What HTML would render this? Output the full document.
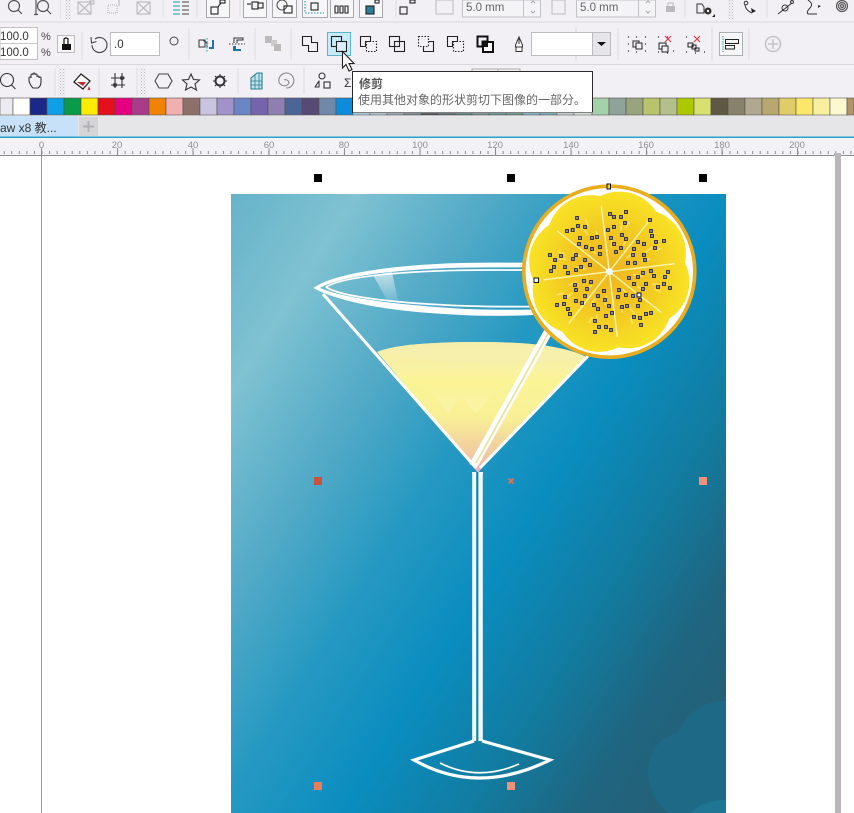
<!DOCTYPE html>
<html><head><meta charset="utf-8"><title>CorelDRAW</title>
<style>
html,body{margin:0;padding:0;background:#fff;width:854px;height:813px;overflow:hidden}
svg{display:block;font-family:"Liberation Sans","Noto Sans CJK SC",sans-serif}
</style></head><body>
<svg width="854" height="813" viewBox="0 0 854 813" xmlns="http://www.w3.org/2000/svg">
<defs>
<linearGradient id="bg" gradientUnits="userSpaceOnUse" x1="231" y1="194" x2="873" y2="599">
<stop offset="0" stop-color="#66b3c9"/><stop offset=".14" stop-color="#7fc2d2"/><stop offset=".3" stop-color="#4ea8c6"/><stop offset=".42" stop-color="#2699c2"/><stop offset=".56" stop-color="#0a8dbf"/><stop offset=".71" stop-color="#137a9e"/><stop offset=".82" stop-color="#1f6580"/><stop offset="1" stop-color="#2a5c70"/>
</linearGradient>
<linearGradient id="liq" x1="0" y1="0" x2="0" y2="1">
<stop offset="0" stop-color="#f6eda6"/><stop offset=".2" stop-color="#f8f2a4"/><stop offset=".3" stop-color="#fbf495"/><stop offset=".58" stop-color="#f9f096"/><stop offset=".82" stop-color="#f2d09e"/><stop offset="1" stop-color="#f4b9a8"/>
</linearGradient>
<linearGradient id="zig" x1="0" y1="0" x2="0" y2="1"><stop offset="0" stop-color="#fdf8c8" stop-opacity="0"/><stop offset="1" stop-color="#fdf8c8" stop-opacity=".4"/></linearGradient>
<linearGradient id="sheen" x1="0" y1="0" x2="0" y2="1"><stop offset="0" stop-color="#fff" stop-opacity=".6"/><stop offset="1" stop-color="#fff" stop-opacity=".1"/></linearGradient>
<radialGradient id="lem" gradientUnits="userSpaceOnUse" cx="0" cy="0" r="82"><stop offset="0" stop-color="#efb622"/><stop offset=".5" stop-color="#f2c722"/><stop offset=".8" stop-color="#f6d924"/><stop offset="1" stop-color="#f9e326"/></radialGradient>
<pattern id="tick" patternUnits="userSpaceOnUse" x="41.5" y="0" width="7.56" height="20"><rect x="0" y="15" width="1" height="3" fill="#8c8c90"/></pattern>
<pattern id="dots" patternUnits="userSpaceOnUse" width="3" height="3"><rect width="1" height="1" fill="#bcbcc0"/><rect x="1.500" y="1.500" width="1" height="1" fill="#d0d0d4"/></pattern>
</defs>

<!-- chrome -->
<rect width="854" height="155" fill="#f2f0f5"/>
<rect y="21.500" width="854" height="1" fill="#d9d9dd"/>
<rect y="64" width="854" height="1" fill="#d9d9dd"/>

<!-- row 1 -->
<g fill="none" stroke="#555" stroke-width="1.200">
<circle cx="14" cy="6" r="5.500"/><path d="M18 10l4 4"/>
<circle cx="43" cy="6" r="5.500"/><path d="M47 10l4 4M36 0v14M34 14.500h4"/>
</g>
<rect x="60" y="0" width="1" height="19" fill="#e2e2e6"/>
<rect x="65" y="0" width="6" height="20" fill="url(#dots)"/>
<g fill="none" stroke="#bdbdc2" stroke-width="1.200">
<rect x="78" y="2" width="13" height="12"/><path d="M78 2l13 12M78 14l13-12M90 1h4v3h-4z"/>
<rect x="108" y="5" width="9" height="8" stroke-dasharray="1 1"/><path d="M119 0v6"/>
<rect x="137" y="2" width="13" height="12"/><path d="M137 2l13 12M137 14l13-12"/>
</g>
<path d="M163 0v17" stroke="#e0e0e4"/>
<g stroke="#444" stroke-width="1"><path d="M182 2h7M182 6h7M182 10h7M182 14h7"/></g>
<g stroke="#17a39b" stroke-width="1"><path d="M173 2h7M173 6h7M173 10h7M173 14h7"/></g>
<path d="M197 0v17" stroke="#ddd"/>
<g fill="#f7f6f9" stroke="#a8a8ac">
<path d="M206.500 0v17.500h23V0M243.500 0v17.500h23V0M272.500 0v17.500h24V0M302.500 0v17.500h25V0M330.500 0v17.500h23V0M359.500 0v17.500h23V0"/>
</g>
<g fill="none" stroke="#222" stroke-width="1.100">
<rect x="211" y="7" width="7" height="7"/><rect x="220" y="0" width="5" height="3"/><path d="M218 7l3-4"/>
<rect x="252" y="2" width="6" height="7"/><rect x="258" y="3" width="5" height="5"/><path d="M247 4h4"/>
<circle cx="282" cy="5" r="5" stroke="#555"/><rect x="284" y="6" width="8" height="7"/>
<rect x="311" y="3" width="7" height="7"/><path d="M305 13h19M305 1v12" stroke-dasharray="1.500 1.500" stroke="#1a9a9a"/>
<path d="M335 6h3v7h-3zM340 6h3v7h-3zM345 6h3v7h-3z"/>
<rect x="366" y="6" width="8" height="8" fill="#2a7f99"/><rect x="375" y="0" width="4" height="3"/>
<rect x="400" y="7" width="7" height="7"/><rect x="410" y="0" width="5" height="3"/>
</g>
<path d="M240 0v17M396 0v17" stroke="#ddd"/>
<rect x="436" y="0" width="17" height="14" fill="none" stroke="#bbb"/>
<rect x="462.500" y="0" width="61" height="17" fill="#f4f3f6" stroke="#c2c2c6"/><rect x="523.500" y="0" width="17" height="17" fill="#f4f3f6" stroke="#c2c2c6"/>
<text x="466" y="11" font-size="11.500" fill="#666">5.0 mm</text>
<path d="M531 3l2 -2 2 2M531 11l2 2 2-2" fill="none" stroke="#aaa"/>
<rect x="552" y="0" width="13" height="14" fill="none" stroke="#bbb"/>
<rect x="576.500" y="0" width="62" height="17" fill="#f4f3f6" stroke="#c2c2c6"/><rect x="638.500" y="0" width="17" height="17" fill="#f4f3f6" stroke="#c2c2c6"/>
<text x="580" y="11" font-size="11.500" fill="#666">5.0 mm</text>
<path d="M646 3l2 -2 2 2M646 11l2 2 2-2" fill="none" stroke="#aaa"/>
<rect x="666" y="6" width="9" height="6" fill="#b9b9bd"/><path d="M668 6V3h5v3" fill="none" stroke="#b9b9bd"/>
<path d="M685 0v17M767 0v17" stroke="#dcdcdf"/>
<path d="M697 4h5l2 3v6h-7z" fill="none" stroke="#333"/><circle cx="708" cy="11" r="3.500" fill="#333"/><circle cx="708" cy="11" r="1.200" fill="#f2f0f5"/><path d="M712 17l3-3v3z" fill="#222"/>
<rect x="728" y="0" width="6" height="20" fill="url(#dots)"/>
<path d="M745 4q0 6 7 9" fill="none" stroke="#333"/><circle cx="746" cy="3" r="1.800" fill="none" stroke="#333"/><path d="M751 8l5 3-4 2z" fill="#222"/>
<path d="M778 14l14-11" fill="none" stroke="#333"/><circle cx="785" cy="8" r="3" fill="none" stroke="#333"/><circle cx="792" cy="2" r="1.500" fill="none" stroke="#333"/>
<path d="M808 0q6 4 2 8t-2 6h9" fill="none" stroke="#333"/><path d="M818 5l3 1-3 2z" fill="#333"/>
<g fill="none" stroke="#555" stroke-width="1.200"><circle cx="842" cy="6" r="5.500"/><circle cx="842" cy="6" r="3.500"/><circle cx="842" cy="6" r="1.500"/></g>

<!-- row 2 -->
<rect x="0" y="27.500" width="37.500" height="32" fill="#fff" stroke="#c2c2c6"/><path d="M0 43.500h37" stroke="#c8c8cc"/>
<text x="0" y="40" font-size="11.500" fill="#333">100.0</text>
<text x="0" y="56" font-size="11.500" fill="#333">100.0</text>
<text x="41" y="40" font-size="11" fill="#444">%</text>
<text x="41" y="56" font-size="11" fill="#444">%</text>
<rect x="57.500" y="35.500" width="17" height="17" fill="#f7f6f9" stroke="#bdbdc0"/>
<rect x="62" y="44" width="9" height="6" fill="#111"/><path d="M64 44v-5a2.500 2.500 0 0 1 4 0v5" fill="none" stroke="#111" stroke-width="1.200"/>
<path d="M82 32v28M189 28v32M255 28v32M291 28v32M576 28v32M618 28v32M712 28v32M749 28v32" stroke="#dcdcdf"/>
<path d="M95 39a7.500 7.500 0 1 1 -3 6M91 37l.5 6 5-1.500" fill="none" stroke="#444" stroke-width="1.100"/>
<rect x="110.500" y="32.500" width="49" height="23" fill="#fff" stroke="#bdbdc1"/>
<text x="114" y="48" font-size="11.500" fill="#333">.0</text>
<circle cx="174" cy="41" r="4" fill="none" stroke="#444"/>
<!-- align icons -->
<path d="M199 40h6v7h-6zM203 40l4 3v4" fill="none" stroke="#333"/><path d="M207 38v14" stroke="#1a9a9a" stroke-dasharray="1.500 1.500"/><path d="M209 47h3v-7h2v9h-5z" fill="#1f75a8"/>
<path d="M229 44h16" stroke="#333" stroke-dasharray="1.500 1.500"/><path d="M234 43v-5h9v2h-6v3" fill="none" stroke="#333"/><path d="M233 46h3v3h5v2h-8z" fill="#1f75a8"/>
<!-- faded -->
<rect x="265" y="36" width="7" height="7" fill="#bbb"/><rect x="271" y="40" width="6" height="6" fill="#ccc"/><rect x="274" y="44" width="7" height="7" fill="#bbb"/>
<!-- combine shapes -->
<g fill="none" stroke="#222" stroke-width="1.100">
<path d="M302.500 36.500h9v6h6v9h-9v-6h-6z"/>
</g>
<rect x="327.500" y="32.500" width="23" height="23" fill="#c9eaf8" stroke="#59b6cf"/>
<g fill="none" stroke="#222" stroke-width="1.100">
<rect x="331.500" y="36.500" width="10" height="10"/><rect x="336.500" y="41.500" width="10" height="10" fill="#d9eefa"/>
<path d="M360.500 36.500h10v5h-5v5h-5z"/><rect x="366.500" y="41.500" width="10" height="10" stroke-dasharray="1.500 1.500"/>
<rect x="389.500" y="36.500" width="10" height="10"/><rect x="394.500" y="41.500" width="10" height="10"/>
<rect x="418.500" y="36.500" width="10" height="10" stroke-dasharray="1.500 1.500"/><path d="M428.500 41.500h5v10h-10v-5"/>
<path d="M447.500 36.500h10v5h-5v5h-5z"/><rect x="453.500" y="41.500" width="10" height="10" stroke-dasharray="1.500 1.500"/>
</g>
<path d="M477.500 36.500h10v5h-5v5h-5z" fill="none" stroke="#111" stroke-width="2"/><rect x="483" y="42" width="10" height="10" fill="#fff" stroke="#111" stroke-width="2"/><rect x="483" y="42" width="5" height="5" fill="#111"/>
<!-- pen -->
<path d="M519 37l3.500 8v2h-7v-2z" fill="#f8f8f8" stroke="#333"/><rect x="516" y="47" width="6" height="4.500" fill="#fff" stroke="#333"/><path d="M519 38v6" stroke="#333"/>
<rect x="531.500" y="32.500" width="61" height="23" fill="#fff" stroke="#bdbdc1"/><rect x="592.500" y="32.500" width="18" height="23" fill="#e6e5ea" stroke="#bdbdc1"/>
<path d="M597 42h9l-4.500 4z" fill="#111"/>
<g fill="none" stroke="#222">
<rect x="633" y="41" width="6" height="6"/><rect x="636" y="43" width="6" height="6" fill="#f2f0f5"/>
<path d="M628 37h1M636 37h1M645 37h1M628 44h1M628 51h1M636 52h1M645 51h1M645 44h1" stroke-width="1.200"/>
<rect x="659" y="43" width="7" height="6"/><rect x="662" y="46" width="6" height="6" fill="#f2f0f5"/>
<path d="M658 37h1M667 37h1M658 52h1M667 53h1M673 51h1" stroke-width="1.200"/>
<rect x="688" y="43" width="5" height="4"/><rect x="692" y="45" width="4" height="4"/><rect x="695" y="48" width="4" height="3"/>
<path d="M686 37h1M704 52h1M686 52h1M695 53h1" stroke-width="1.200"/>
</g>
<path d="M665 36l6 6M671 36l-6 6M694 36l6 6M700 36l-6 6" stroke="#e2394a" stroke-width="1.200"/>
<rect x="719.500" y="32.500" width="23" height="23" fill="#f7f6f9" stroke="#a9b1b5"/>
<path d="M723 36v16" stroke="#1a9a9a" stroke-dasharray="1.500 1"/>
<rect x="725.500" y="39.500" width="13" height="4" fill="none" stroke="#222"/><rect x="725.500" y="45.500" width="9" height="3.500" fill="none" stroke="#222"/>
<circle cx="773" cy="44" r="7.500" fill="none" stroke="#c4c4c8" stroke-width="1.600"/><path d="M773 39v10M768 44h10" stroke="#c4c4c8" stroke-width="1.600"/>

<!-- row 3 -->
<g fill="none" stroke="#333" stroke-width="1.100">
<circle cx="7" cy="80" r="6.500"/><path d="M11.500 85l4 4"/>
<path d="M33 88q-3-3-4-7v-3a1 1 0 0 1 2 0v-3a1 1 0 0 1 2 0v-1a1 1 0 0 1 2 0v1a1 1 0 0 1 2 0v2a1 1 0 0 1 2 0v1a1 1 0 0 1 2 0v4q0 4-3 6z"/>
<path d="M115 73v15M122 73v15M111 78h14M111 85h14"/><circle cx="122" cy="78" r="1.500"/><circle cx="115" cy="85" r="1.500"/>
<path d="M155 81l4-7h9l4 7-4 7h-9z" stroke="#444"/>
<path d="M191 74l2.500 5.500 6 .5-4.500 4 1.500 6-5.500-3-5.500 3 1.500-6-4.500-4 6-.5z"/>
<circle cx="220" cy="81" r="4.500" stroke-width="2"/><path d="M220 74v2.500M220 85.500v2.500M213 81h2.500M224.500 81h2.500M215 76l2 2M223 84l2 2M225 76l-2 2M217 84l-2 2"/>
<path d="M257 73h5v16h-11v-11z" fill="#bfe4ee" stroke="#2a7f8c"/><path d="M251 81h11M251 85h11M255 75v14M259 73v16" stroke="#2a7f8c" stroke-width=".8"/>
<path d="M286 88a7.500 7.500 0 1 0-7-6 5.500 5.500 0 0 0 10 1 3.500 3.500 0 0 0-5-3" stroke="#888"/>
<circle cx="322" cy="76" r="3"/><path d="M315 87l4-6v6z" stroke-linejoin="round"/><rect x="324" y="82" width="6" height="6"/>
<text x="344" y="87" font-size="12" fill="#333" stroke="none">Σ</text>
</g>
<rect x="58" y="68" width="7" height="28" fill="url(#dots)"/>
<rect x="140" y="68" width="6" height="28" fill="url(#dots)"/>
<path d="M55 68v28M99 68v28M137 68v28M238 68v26M304 68v26" stroke="#dcdcdf"/>
<path d="M81 74l9 7-7 8-9-7z" fill="#fff" stroke="#222" stroke-width="1.300"/><path d="M77 82h9l-3 4z" fill="#c3272b"/><path d="M89 86l1.500 4h-3z" fill="#d63333"/>
<!-- little box behind tooltip -->
<path d="M472 71v-2h48v2M498 69v2" fill="none" stroke="#aaa"/>

<!-- palette -->
<g stroke="#55504c" stroke-width=".6">
<rect x="0" y="98" width="13" height="17" fill="#ecebef"/>
<rect x="13" y="98" width="17" height="17" fill="#ffffff"/>
<rect x="30" y="98" width="17" height="17" fill="#1c2888"/>
<rect x="47" y="98" width="17" height="17" fill="#0f9fe6"/>
<rect x="64" y="98" width="17" height="17" fill="#0a9b4a"/>
<rect x="81" y="98" width="17" height="17" fill="#ffec00"/>
<rect x="98" y="98" width="17" height="17" fill="#e60f1e"/>
<rect x="115" y="98" width="17" height="17" fill="#e5007f"/>
<rect x="132" y="98" width="17" height="17" fill="#a93c8a"/>
<rect x="149" y="98" width="17" height="17" fill="#f08300"/>
<rect x="166" y="98" width="17" height="17" fill="#f0b0b0"/>
<rect x="183" y="98" width="17" height="17" fill="#8b7169"/>
<rect x="200" y="98" width="17" height="17" fill="#cac4e1"/>
<rect x="217" y="98" width="17" height="17" fill="#a193c9"/>
<rect x="234" y="98" width="17" height="17" fill="#6b85c5"/>
<rect x="251" y="98" width="17" height="17" fill="#7663ad"/>
<rect x="268" y="98" width="17" height="17" fill="#8d80b1"/>
<rect x="285" y="98" width="17" height="17" fill="#4a6596"/>
<rect x="302" y="98" width="17" height="17" fill="#574b76"/>
<rect x="319" y="98" width="17" height="17" fill="#7089a9"/>
<rect x="336" y="98" width="17" height="17" fill="#0d8cdc"/>
<rect x="353" y="98" width="17" height="17" fill="#a6cfe4"/>
<rect x="370" y="98" width="17" height="17" fill="#b2c6d6"/>
<rect x="387" y="98" width="17" height="17" fill="#8fa5b4"/>
<rect x="404" y="98" width="17" height="17" fill="#6f8290"/>
<rect x="421" y="98" width="17" height="17" fill="#45484e"/>
<rect x="438" y="98" width="17" height="17" fill="#52646c"/>
<rect x="455" y="98" width="17" height="17" fill="#4f7a80"/>
<rect x="472" y="98" width="17" height="17" fill="#6d8e92"/>
<rect x="489" y="98" width="17" height="17" fill="#5a8c90"/>
<rect x="506" y="98" width="17" height="17" fill="#5f9088"/>
<rect x="523" y="98" width="17" height="17" fill="#77b4c8"/>
<rect x="540" y="98" width="17" height="17" fill="#6ea6ba"/>
<rect x="557" y="98" width="17" height="17" fill="#c4d2d4"/>
<rect x="574" y="98" width="18" height="17" fill="#dfe7e0"/>
<rect x="592" y="98" width="17" height="17" fill="#a3d2aa"/>
<rect x="609" y="98" width="17" height="17" fill="#8fa39a"/>
<rect x="626" y="98" width="17" height="17" fill="#98a47e"/>
<rect x="643" y="98" width="17" height="17" fill="#b8c46c"/>
<rect x="660" y="98" width="17" height="17" fill="#b4c08c"/>
<rect x="677" y="98" width="17" height="17" fill="#aec800"/>
<rect x="694" y="98" width="17" height="17" fill="#d8e070"/>
<rect x="711" y="98" width="17" height="17" fill="#5e5844"/>
<rect x="728" y="98" width="17" height="17" fill="#88826c"/>
<rect x="745" y="98" width="17" height="17" fill="#b0a890"/>
<rect x="762" y="98" width="17" height="17" fill="#b8a870"/>
<rect x="779" y="98" width="17" height="17" fill="#e0cc68"/>
<rect x="796" y="98" width="17" height="17" fill="#fce868"/>
<rect x="813" y="98" width="17" height="17" fill="#f8f0a0"/>
<rect x="830" y="98" width="17" height="17" fill="#fcf8d0"/>
<rect x="847" y="98" width="7" height="17" fill="#b09468"/>
</g>

<!-- tabs -->
<rect y="116" width="854" height="21" fill="#e6e6e9"/>
<rect y="116" width="78" height="21" fill="#c7e2f8"/>
<text x="0" y="132" font-size="12" fill="#333">aw x8 教...</text>
<rect x="79" y="117" width="19" height="19" fill="#d5d5d8"/>
<path d="M88.500 121v11M83 126.500h11" stroke="#b0b0b4" stroke-width="2"/>
<rect y="136.500" width="854" height="1.500" fill="#2aa3c9"/>

<!-- ruler -->
<rect y="138" width="854" height="17" fill="#f3f2f6"/>
<g transform="translate(0,136)"><rect y="0" width="854" height="20" fill="url(#tick)"/></g>
<path d="M0 155.500h854" stroke="#8e8e92"/>
<path d="M41.500 148v8M117.500 148v7M193 148v7M269 148v7M344.500 148v7M420 148v7M495.500 148v7M571 148v7M646.500 148v7M722 148v7M797.500 148v7" stroke="#8c8c90"/>
<g font-size="9.500" fill="#8e8e92" text-anchor="middle">
<text x="41.500" y="148">0</text><text x="117" y="148">20</text><text x="193" y="148">40</text><text x="269" y="148">60</text><text x="344" y="148">80</text><text x="420" y="148">100</text><text x="495" y="148">120</text><text x="571" y="148">140</text><text x="646" y="148">160</text><text x="722" y="148">180</text><text x="797" y="148">200</text>
</g>
<rect x="834" y="153" width="7" height="3" fill="#bab6bc"/>

<!-- canvas -->
<rect x="41" y="156" width="1" height="657" fill="#9b9b9e"/>
<rect x="835" y="156" width="6" height="657" fill="#bab6bc"/>

<!-- poster -->
<rect x="231" y="194" width="495" height="619" fill="url(#bg)"/>
<path d="M726 701C706 700 686 712 678 733C660 736 648 752 648 772C648 788 656 802 668 813L726 813Z" fill="#1e6a86"/>
<path d="M726 800C710 800 698 805 690 813L726 813Z" fill="#1f7594"/>
<!-- liquid -->
<path d="M377 352Q400 342 480 342Q560 342 588 358L478 471Z" fill="url(#liq)"/>
<path d="M377 352Q400 342 480 342Q560 342 588 358Q480 372 377 352Z" fill="#f6efae" opacity=".8"/>
<path d="M425 385L448 413L461 397L476 413L491 397L520 385Z" fill="url(#zig)"/>
<path d="M471 464h14l-7 9z" fill="#f5b3ba"/>
<!-- glass -->
<path d="M323 294L476 468M480 468L588 356" stroke="#fff" stroke-width="3" fill="none"/>
<path d="M373 275L392 272L398 301L387 300Z" fill="url(#sheen)"/>
<path fill="#fff" stroke="#fff" stroke-width=".7" fill-rule="evenodd" d="M314 288C340 270 420 263 490 263L560 263L560 313C520 316 480 316 450 314C390 311 340 302 314 288ZM319 288C345 273 420 267 490 267L560 267L560 309C510 311 470 310 445 308C390 304 340 298 319 288Z"/>
<path d="M326 287C345 275 420 270 490 270L560 270M326 287C340 297 400 303 445 305C480 307 530 307 560 306" fill="none" stroke="#fff" stroke-width="1.700"/>
<!-- stem -->
<rect x="472" y="472" width="11" height="269" fill="#f2fafc"/>
<rect x="476.200" y="472" width="2.200" height="269" fill="#1584ab"/>
<path d="M472.500 474v265M482.500 474v265" stroke="#c6e4ee" stroke-width="1"/>
<!-- straw -->
<path d="M473 466L548 332" stroke="#fff" stroke-width="8.500" fill="none"/>
<path d="M476 463L549 332" stroke="#e4e29c" stroke-width="1.600" fill="none"/>
<!-- base -->
<path d="M474 741L414 760Q477 796 550 760L482 741" fill="none" stroke="#fff" stroke-width="3.200"/>
<path d="M440 763Q478 782 519 764" fill="none" stroke="#fff" stroke-width="1.700"/>

<!-- lemon -->
<g transform="translate(609.300,271.700)">
<circle r="85.500" fill="#fff" stroke="#e9ad1e" stroke-width="3.600"/>
<g fill="url(#lem)">
<circle r="62"/>
<circle cy="-38" r="43.500" transform="rotate(15.500)"/><circle cy="-38" r="43.500" transform="rotate(60.500)"/><circle cy="-38" r="43.500" transform="rotate(105.500)"/><circle cy="-38" r="43.500" transform="rotate(150.500)"/><circle cy="-38" r="43.500" transform="rotate(195.500)"/><circle cy="-38" r="43.500" transform="rotate(240.500)"/><circle cy="-38" r="43.500" transform="rotate(285.500)"/><circle cy="-38" r="43.500" transform="rotate(330.500)"/>
</g>
<g stroke="#f9e96e" stroke-width="1.800" opacity=".75">
<path d="M0 -24v-10M8 -42v-8" transform="rotate(5)"/><path d="M0 -30v-9M-6 -46v-7" transform="rotate(28)"/><path d="M0 -22v-9M7 -40v-9" transform="rotate(52)"/><path d="M0 -34v-9M-6 -50v-7" transform="rotate(72)"/><path d="M0 -24v-10M7 -44v-8" transform="rotate(97)"/><path d="M0 -32v-9M-6 -48v-7" transform="rotate(118)"/><path d="M0 -22v-9M6 -42v-9" transform="rotate(142)"/><path d="M0 -34v-9M-6 -50v-7" transform="rotate(162)"/><path d="M0 -24v-10M7 -44v-8" transform="rotate(187)"/><path d="M0 -30v-9M-6 -48v-7" transform="rotate(208)"/><path d="M0 -22v-9M6 -42v-9" transform="rotate(232)"/><path d="M0 -34v-9M-6 -50v-7" transform="rotate(252)"/><path d="M0 -24v-10M7 -44v-8" transform="rotate(277)"/><path d="M0 -32v-9M-6 -48v-7" transform="rotate(298)"/><path d="M0 -22v-9M6 -42v-9" transform="rotate(322)"/><path d="M0 -34v-9M-6 -50v-7" transform="rotate(342)"/>
</g>
<g stroke="#fbf3a4" stroke-width="1.500">
<path d="M0 -2V-66" transform="rotate(-7)"/><path d="M0 -2V-66" transform="rotate(38)"/><path d="M0 -2V-66" transform="rotate(83)"/><path d="M0 -2V-66" transform="rotate(128)"/><path d="M0 -2V-66" transform="rotate(173)"/><path d="M0 -2V-66" transform="rotate(218)"/><path d="M0 -2V-66" transform="rotate(263)"/><path d="M0 -2V-66" transform="rotate(308)"/>
</g>
<circle r="3.500" fill="#fff"/>
</g>
<!-- seed nodes -->
<g transform="translate(510,175) scale(.3333)">
<g fill="#dcdcc6" stroke="#26264a" stroke-width="3.500">
<rect x="197" y="125" width="8" height="8"/><rect x="167" y="164" width="8" height="8"/><rect x="184" y="161" width="8" height="8"/><rect x="200" y="149" width="8" height="8"/><rect x="221" y="152" width="8" height="8"/><rect x="206" y="185" width="8" height="8"/><rect x="203" y="203" width="8" height="8"/><rect x="224" y="212" width="8" height="8"/><rect x="242" y="218" width="8" height="8"/><rect x="242" y="185" width="8" height="8"/><rect x="257" y="182" width="8" height="8"/><rect x="266" y="212" width="8" height="8"/><rect x="266" y="233" width="8" height="8"/>
<rect x="296" y="113" width="8" height="8"/><rect x="308" y="122" width="8" height="8"/><rect x="329" y="122" width="8" height="8"/><rect x="344" y="107" width="8" height="8"/><rect x="341" y="140" width="8" height="8"/><rect x="308" y="152" width="8" height="8"/><rect x="290" y="161" width="8" height="8"/><rect x="332" y="176" width="8" height="8"/><rect x="344" y="188" width="8" height="8"/><rect x="299" y="185" width="8" height="8"/><rect x="308" y="203" width="8" height="8"/><rect x="329" y="215" width="8" height="8"/><rect x="314" y="227" width="8" height="8"/>
<rect x="416" y="131" width="8" height="8"/><rect x="419" y="164" width="8" height="8"/><rect x="422" y="179" width="8" height="8"/><rect x="380" y="197" width="8" height="8"/><rect x="398" y="203" width="8" height="8"/><rect x="434" y="197" width="8" height="8"/><rect x="458" y="194" width="8" height="8"/><rect x="431" y="215" width="8" height="8"/><rect x="368" y="218" width="8" height="8"/><rect x="365" y="236" width="8" height="8"/><rect x="398" y="236" width="8" height="8"/><rect x="401" y="251" width="8" height="8"/><rect x="350" y="260" width="8" height="8"/><rect x="371" y="260" width="8" height="8"/>
<rect x="116" y="236" width="8" height="8"/><rect x="149" y="239" width="8" height="8"/><rect x="131" y="251" width="8" height="8"/><rect x="194" y="236" width="8" height="8"/><rect x="185" y="248" width="8" height="8"/><rect x="221" y="251" width="8" height="8"/><rect x="128" y="272" width="8" height="8"/><rect x="119" y="284" width="8" height="8"/><rect x="161" y="272" width="8" height="8"/><rect x="170" y="290" width="8" height="8"/><rect x="194" y="281" width="8" height="8"/><rect x="209" y="272" width="8" height="8"/><rect x="236" y="266" width="8" height="8"/>
<rect x="419" y="284" width="8" height="8"/><rect x="470" y="287" width="8" height="8"/><rect x="395" y="290" width="8" height="8"/><rect x="461" y="302" width="8" height="8"/><rect x="428" y="299" width="8" height="8"/><rect x="380" y="302" width="8" height="8"/><rect x="353" y="305" width="8" height="8"/><rect x="368" y="323" width="8" height="8"/><rect x="404" y="323" width="8" height="8"/><rect x="458" y="323" width="8" height="8"/><rect x="440" y="332" width="8" height="8"/><rect x="476" y="335" width="8" height="8"/><rect x="395" y="338" width="8" height="8"/>
<rect x="218" y="314" width="8" height="8"/><rect x="239" y="317" width="8" height="8"/><rect x="191" y="326" width="8" height="8"/><rect x="194" y="341" width="8" height="8"/><rect x="227" y="338" width="8" height="8"/><rect x="161" y="362" width="8" height="8"/><rect x="221" y="359" width="8" height="8"/><rect x="194" y="374" width="8" height="8"/><rect x="212" y="380" width="8" height="8"/><rect x="137" y="386" width="8" height="8"/><rect x="158" y="383" width="8" height="8"/><rect x="170" y="398" width="8" height="8"/><rect x="176" y="413" width="8" height="8"/>
<rect x="278" y="344" width="8" height="8"/><rect x="260" y="359" width="8" height="8"/><rect x="281" y="371" width="8" height="8"/><rect x="248" y="386" width="8" height="8"/><rect x="260" y="398" width="8" height="8"/><rect x="293" y="389" width="8" height="8"/><rect x="302" y="410" width="8" height="8"/><rect x="284" y="419" width="8" height="8"/><rect x="251" y="434" width="8" height="8"/><rect x="263" y="452" width="8" height="8"/><rect x="284" y="452" width="8" height="8"/><rect x="299" y="461" width="8" height="8"/><rect x="251" y="467" width="8" height="8"/>
<rect x="323" y="341" width="8" height="8"/><rect x="320" y="362" width="8" height="8"/><rect x="344" y="356" width="8" height="8"/><rect x="365" y="359" width="8" height="8"/><rect x="386" y="371" width="8" height="8"/><rect x="380" y="389" width="8" height="8"/><rect x="347" y="389" width="8" height="8"/><rect x="332" y="392" width="8" height="8"/><rect x="368" y="422" width="8" height="8"/><rect x="386" y="425" width="8" height="8"/><rect x="404" y="413" width="8" height="8"/><rect x="419" y="410" width="8" height="8"/><rect x="389" y="446" width="8" height="8"/>
</g>
<rect x="381" y="354" width="12" height="12" fill="#fff" stroke="#26264a" stroke-width="3.500"/>
</g>
<rect x="607" y="184" width="3.500" height="5" fill="#f2d53c" stroke="#111" stroke-width="1"/>
<rect x="534" y="278" width="4.500" height="4.500" fill="#fff" stroke="#111" stroke-width="1"/>

<!-- handles -->
<rect x="314" y="174" width="8" height="8" fill="#000"/><rect x="507" y="174" width="8" height="8" fill="#000"/><rect x="699" y="174" width="8" height="8" fill="#000"/>
<rect x="314" y="477" width="8" height="8" fill="#c9523c"/>
<rect x="699" y="477" width="8" height="8" fill="#ee9176"/>
<path d="M508.500 478.500l5 5M513.500 478.500l-5 5" stroke="#e8704c" stroke-width="1.800"/>
<rect x="314" y="782" width="8" height="8" fill="#ea7d5c"/>
<rect x="507" y="782" width="8" height="8" fill="#ee9176"/>

<!-- tooltip -->
<rect x="352.500" y="71.500" width="240" height="41" fill="#fff" stroke="#2a2a2a"/>
<rect x="353" y="112" width="240" height="1.500" fill="#bbb" opacity=".6"/>
<text x="359" y="88" font-size="12" font-weight="700" fill="#555">修剪</text>
<text x="358" y="104" font-size="12" fill="#666">使用其他对象的形状剪切下图像的一部分。</text>

<!-- cursor -->
<path d="M342.500 51.500V68l3.500-3.500 3 6.500 3-1.500-3-6h5z" fill="#fff" stroke="#222" stroke-width="1.100"/>
</svg>
</body></html>
